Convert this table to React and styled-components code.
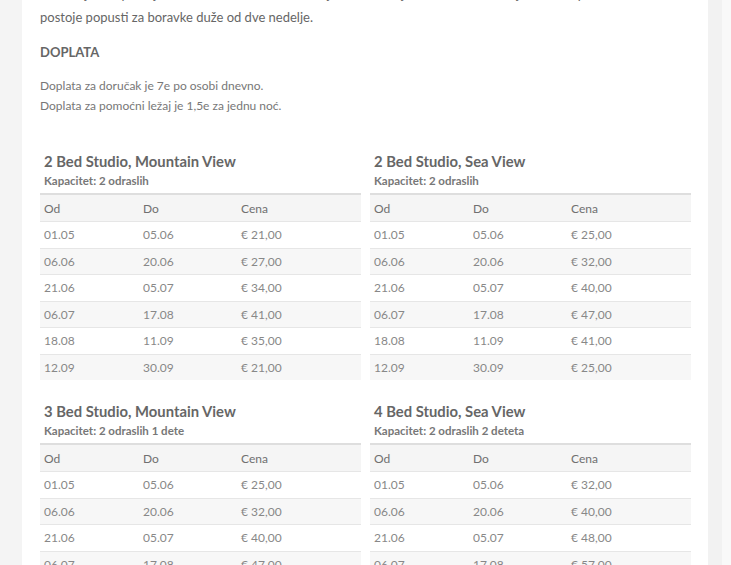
import styled, { createGlobalStyle } from 'styled-components'

const GlobalStyle = createGlobalStyle`
  html, body {
    margin: 0;
    padding: 0;
    background: #f9f9f9;
    overflow: hidden;
  }

  body {
    font-family: Lato, "Open Sans", sans-serif;
  }
`

const prices = [
  {
    title: '2 Bed Studio, Mountain View',
    capacity: 'Kapacitet: 2 odraslih',
    rows: [
      ['01.05', '05.06', '€ 21,00'],
      ['06.06', '20.06', '€ 27,00'],
      ['21.06', '05.07', '€ 34,00'],
      ['06.07', '17.08', '€ 41,00'],
      ['18.08', '11.09', '€ 35,00'],
      ['12.09', '30.09', '€ 21,00'],
    ],
  },
  {
    title: '2 Bed Studio, Sea View',
    capacity: 'Kapacitet: 2 odraslih',
    rows: [
      ['01.05', '05.06', '€ 25,00'],
      ['06.06', '20.06', '€ 32,00'],
      ['21.06', '05.07', '€ 40,00'],
      ['06.07', '17.08', '€ 47,00'],
      ['18.08', '11.09', '€ 41,00'],
      ['12.09', '30.09', '€ 25,00'],
    ],
  },
  {
    title: '3 Bed Studio, Mountain View',
    capacity: 'Kapacitet: 2 odraslih 1 dete',
    rows: [
      ['01.05', '05.06', '€ 25,00'],
      ['06.06', '20.06', '€ 32,00'],
      ['21.06', '05.07', '€ 40,00'],
      ['06.07', '17.08', '€ 47,00'],
      ['18.08', '11.09', '€ 41,00'],
      ['12.09', '30.09', '€ 25,00'],
    ],
  },
  {
    title: '4 Bed Studio, Sea View',
    capacity: 'Kapacitet: 2 odraslih 2 deteta',
    rows: [
      ['01.05', '05.06', '€ 32,00'],
      ['06.06', '20.06', '€ 40,00'],
      ['21.06', '05.07', '€ 48,00'],
      ['06.07', '17.08', '€ 57,00'],
      ['18.08', '11.09', '€ 48,00'],
      ['12.09', '30.09', '€ 32,00'],
    ],
  },
]

const PriceTable = ({ title, capacity, rows }) => {
  return (
    <Section>
      <Title>{title}</Title>
      <Capacity>{capacity}</Capacity>
      <Table>
        <colgroup>
          <col style={{ width: '99px' }} />
          <col style={{ width: '98px' }} />
          <col />
        </colgroup>
        <thead>
          <tr>
            <Th>Od</Th>
            <Th>Do</Th>
            <Th>Cena</Th>
          </tr>
        </thead>
        <tbody>
          {rows.map((row) => (
            <Row key={row[0]}>
              {row.map((cell, i) => (
                <Td key={i}>{cell}</Td>
              ))}
            </Row>
          ))}
        </tbody>
      </Table>
    </Section>
  )
}

const App = () => {
  return (
    <Page>
      <GlobalStyle />
      <LeftGutter />
      <Card>
        <Intro>
          u budžaju. Ne postoje smene - datum dolaska i broj noći određujete sami. Putem mejla možete proveriti da li
          postoje popusti za boravke duže od dve nedelje.
        </Intro>
        <Heading>DOPLATA</Heading>
        <Notes>
          <Note>Doplata za doručak je 7e po osobi dnevno.</Note>
          <Note>Doplata za pomoćni ležaj je 1,5e za jednu noć.</Note>
        </Notes>
        <Grid>
          {prices.map((item) => (
            <PriceTable key={item.title} {...item} />
          ))}
        </Grid>
      </Card>
      <RightGutter />
    </Page>
  )
}

const Page = styled.div`
  display: flex;
  min-height: 565px;
  background: #f9f9f9;
`

const LeftGutter = styled.div`
  width: 22px;
  flex-shrink: 0;
  background: #f4f4f4;
`

const RightGutter = styled.div`
  width: 14px;
  flex-shrink: 0;
  background: #f2f2f2;
`

const Card = styled.div`
  width: 686px;
  flex-shrink: 0;
  background: #fff;
  padding: 0 17px 0 18px;
  box-sizing: border-box;
`

const Intro = styled.p`
  margin: -17px 0 0;
  font-size: 13px;
  line-height: 23px;
  color: #666;
`

const Heading = styled.h4`
  margin: 13px 0 0;
  font-size: 13px;
  line-height: 20px;
  font-weight: 700;
  color: #666;
`

const Notes = styled.div`
  margin-top: 14px;
`

const Note = styled.p`
  margin: 0;
  font-size: 12px;
  line-height: 20px;
  color: #777;
`

const Grid = styled.div`
  display: grid;
  grid-template-columns: 321px 321px;
  column-gap: 9px;
  row-gap: 21px;
  margin-top: 35px;
`

const Section = styled.div`
  display: flex;
  flex-direction: column;
`

const Title = styled.h3`
  margin: 0;
  padding: 0 4px;
  font-size: 14.8px;
  line-height: 20px;
  font-weight: 700;
  color: #666;
`

const Capacity = styled.div`
  padding: 0 4px;
  margin-top: 2px;
  font-size: 11.5px;
  line-height: 16px;
  font-weight: 700;
  color: #777;
`

const Table = styled.table`
  width: 100%;
  margin-top: 4px;
  border-collapse: collapse;
  table-layout: fixed;
  border-top: 2px solid #dedede;
`

const Th = styled.th`
  height: 26px;
  padding: 0 4px;
  text-align: left;
  font-size: 12px;
  font-weight: 400;
  color: #707070;
  background: #f5f5f5;
`

const Row = styled.tr`
  &:nth-child(even) {
    background: #f7f7f7;
  }
`

const Td = styled.td`
  height: 25.5px;
  padding: 0 4px;
  border-top: 1px solid #e6e6e6;
  font-size: 12px;
  color: #888;
`

export default App
